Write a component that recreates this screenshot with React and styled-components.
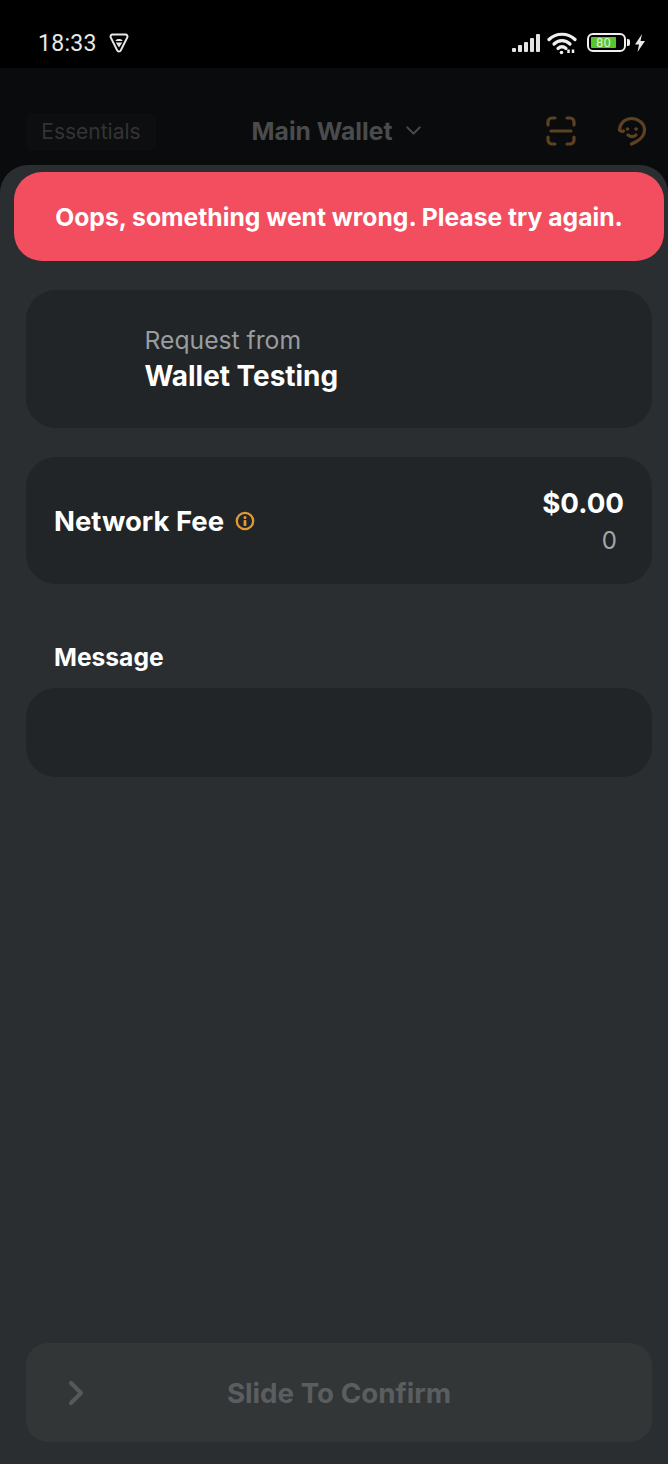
import React from "react";
import styled, { createGlobalStyle } from "styled-components";
import { ChevronDown, ChevronRight } from "lucide-react";

const GlobalStyle = createGlobalStyle`
  html, body {
    margin: 0;
    padding: 0;
    background: #0a0b0c;
  }
  * {
    box-sizing: border-box;
  }
`;

const Screen = styled.div`
  position: relative;
  width: 668px;
  height: 1464px;
  overflow: hidden;
  display: flex;
  flex-direction: column;
  background: #0a0b0c;
  font-family: Inter, "Liberation Sans", sans-serif;
`;

const StatusBar = styled.div`
  height: 68px;
  flex-shrink: 0;
  background: #000;
  display: flex;
  align-items: center;
  justify-content: space-between;
  padding: 17px 22px 0 38px;
  color: #e8e8e8;
`;

const StatusGroup = styled.div`
  display: flex;
  align-items: center;
  gap: ${(p) => p.$gap || 0}px;
`;

const Time = styled.span`
  padding-top: 2px;
  font-family: Roboto, sans-serif;
  font-size: 23px;
  letter-spacing: 0.3px;
`;

const Header = styled.div`
  height: 97px;
  flex-shrink: 0;
  display: flex;
  align-items: center;
  justify-content: space-between;
  padding: 28px 21px 0 26px;
`;

const Pill = styled.div`
  width: 130px;
  height: 38px;
  margin-top: 2px;
  display: flex;
  align-items: center;
  justify-content: center;
  background: #0d0e0f;
  border-radius: 6px;
  color: #323435;
  font-size: 21px;
`;

const WalletName = styled.div`
  display: flex;
  align-items: center;
  gap: 9px;
  margin-right: 24px;
  color: #4a4b4c;
  font-size: 24.700px;
  font-weight: 700;
`;

const HeaderIcons = styled.div`
  display: flex;
  align-items: center;
  gap: 41px;
`;

const Sheet = styled.div`
  flex: 1;
  display: flex;
  flex-direction: column;
  padding: 125px 16px 22px 26px;
  background: #2a2e31;
  border-radius: 28px 28px 0 0;
`;

const Toast = styled.div`
  position: absolute;
  left: 14px;
  top: 172px;
  width: 650px;
  height: 89px;
  display: flex;
  align-items: center;
  justify-content: center;
  background: #f34e5f;
  border-radius: 28px;
  color: #fff;
  font-size: 24.700px;
  font-weight: 700;
  white-space: nowrap;
`;

const Card = styled.div`
  height: ${(p) => p.$height}px;
  margin-bottom: ${(p) => p.$gap || 0}px;
  display: flex;
  background: #212527;
  border-radius: 30px;
`;

const RequestCard = styled(Card)`
  flex-direction: column;
  justify-content: center;
  padding-left: 118.500px;
`;

const FeeCard = styled(Card)`
  align-items: center;
  justify-content: space-between;
  padding: 0 28px;
`;

const RequestLabel = styled.div`
  color: #9a9d9f;
  font-size: 24.700px;
  line-height: 34px;
`;

const RequestName = styled.div`
  color: #fff;
  font-size: 27.900px;
  font-weight: 700;
  line-height: 38px;
`;

const FeeTitle = styled.div`
  display: flex;
  align-items: center;
  gap: 11px;
  color: #fff;
  font-size: 27.500px;
  font-weight: 700;
`;

const FeeAmount = styled.div`
  display: flex;
  flex-direction: column;
  align-items: flex-end;
  gap: 2px;
  margin-top: 2px;
`;

const FeeUsd = styled.div`
  color: #fff;
  font-size: 27.700px;
  font-weight: 700;
  line-height: 36px;
`;

const FeeRaw = styled.div`
  color: #a4a7a9;
  font-size: 24px;
  line-height: 36px;
  padding-right: 7px;
`;

const SectionLabel = styled.div`
  margin: 0 0 15px 28px;
  color: #fff;
  font-size: 24.600px;
  font-weight: 700;
  line-height: 31px;
`;

const Slider = styled.div`
  position: relative;
  height: 99px;
  margin-top: auto;
  display: flex;
  align-items: center;
  justify-content: center;
  background: #323637;
  border-radius: 22px;
  color: #5b5e60;
  font-size: 27.750px;
  font-weight: 700;
`;

const SliderKnob = styled.div`
  position: absolute;
  left: 30px;
  top: 30px;
  color: #55595b;
  display: flex;
`;

const WifiSvg = styled.svg`
  margin: 0 2px 0 -2px;
`;

const BatteryShell = styled.div`
  position: relative;
  width: 39px;
  height: 19px;
  padding: 2px;
  border: 2px solid #f0f0f0;
  border-radius: 6px;
  &::after {
    content: "";
    position: absolute;
    right: -6px;
    top: 4px;
    width: 3px;
    height: 7px;
    border-radius: 0 2px 2px 0;
    background: #f0f0f0;
  }
`;

const BatteryFill = styled.div`
  height: 100%;
  width: 80%;
  display: flex;
  align-items: center;
  justify-content: center;
  background: #58c22f;
  border-radius: 1px;
  color: #d8f5c8;
  font-family: Roboto, sans-serif;
  font-size: 13px;
`;

function ShieldIcon() {
  return (
    <svg width="20" height="20" viewBox="0 0 20 20" fill="none">
      <path d="M3.500 1.500h13a2 2 0 0 1 1.800 2.900l-6.500 13a2 2 0 0 1-3.600 0L1.700 4.400A2 2 0 0 1 3.500 1.500z" stroke="#e8e8e8" strokeWidth="2" />
      <path d="M6.500 8c.6-2.600 6.400-2.600 7 0z" fill="#e8e8e8" />
      <path d="M6.800 9.500h6.400L10 14.500z" fill="#e8e8e8" />
    </svg>
  );
}

function SignalIcon() {
  return (
    <svg width="30" height="20" viewBox="0 0 30 20" fill="#e4e4e4">
      <rect x="1" y="15" width="4" height="4" rx="1" />
      <rect x="7" y="12" width="4" height="7" rx="1" />
      <rect x="13" y="9" width="4" height="10" rx="1" />
      <rect x="19" y="5" width="4" height="14" rx="1" />
      <rect x="25" y="1" width="4" height="18" rx="1" />
    </svg>
  );
}

function WifiIcon() {
  return (
    <WifiSvg width="30" height="24" viewBox="0 0 30 24" fill="none" stroke="#f0f0f0" strokeWidth="3.200" strokeLinecap="round">
      <path d="M2 8.500c7-7 19-7 26 0" />
      <path d="M7 13c4.500-4.500 11.500-4.500 16 0" />
      <path d="M11 17.500c2.500-2.200 5.500-2.200 8 0" />
      <circle cx="14.500" cy="21.500" r="1.800" fill="#f0f0f0" stroke="none" />
      <path d="M21.500 22v-3.500M26 22v-3.500" strokeWidth="2.500" strokeLinecap="butt" />
    </WifiSvg>
  );
}

function BoltIcon() {
  return (
    <svg width="12" height="20" viewBox="0 0 12 20" fill="#e8e8e8">
      <path d="M8 1L1 11.500h4L3.500 19 11 8H6.500z" />
    </svg>
  );
}

function ScanIcon() {
  return (
    <svg width="30" height="30" viewBox="0 0 30 30" fill="none" stroke="#5d4222" strokeWidth="3.200" strokeLinecap="round">
      <path d="M2 9V6a4 4 0 0 1 4-4h3" />
      <path d="M21 2h3a4 4 0 0 1 4 4v3" />
      <path d="M2 21v3a4 4 0 0 0 4 4h3" />
      <path d="M28 21v3a4 4 0 0 1-4 4h-3" />
      <path d="M5 15h20" />
    </svg>
  );
}

function SupportIcon() {
  return (
    <svg width="30" height="30" viewBox="0 0 30 30" fill="none" stroke="#5d4222" strokeWidth="3.200" strokeLinecap="round">
      <path d="M2.500 14C3 7 8 2.500 14.500 2.500S27 7 27.500 13c.3 5-3 10-8 12.500l-5 2.500" />
      <path d="M2.500 14c1.500 1.500 3 1.500 4 1" />
      <circle cx="10.500" cy="13" r="1.300" fill="#5d4222" strokeWidth="1" />
      <circle cx="19" cy="13" r="1.300" fill="#5d4222" strokeWidth="1" />
      <path d="M11 19c2.500 2 5.500 2 8 0" />
    </svg>
  );
}

function InfoIcon() {
  return (
    <svg width="20" height="20" viewBox="0 0 20 20" fill="none">
      <circle cx="10" cy="10" r="8.200" stroke="#e09a35" strokeWidth="2.300" />
      <circle cx="10" cy="6.500" r="1.500" fill="#e09a35" />
      <rect x="8.600" y="9" width="2.800" height="6" rx="0.800" fill="#e09a35" />
    </svg>
  );
}

export default function App() {
  return (
    <>
      <GlobalStyle />
      <Screen>
        <StatusBar>
          <StatusGroup $gap={12}>
            <Time>18:33</Time>
            <ShieldIcon />
          </StatusGroup>
          <StatusGroup $gap={8}>
            <SignalIcon />
            <WifiIcon />
            <BatteryShell>
              <BatteryFill>80</BatteryFill>
            </BatteryShell>
            <BoltIcon />
          </StatusGroup>
        </StatusBar>
        <Header>
          <Pill>Essentials</Pill>
          <WalletName>
            Main Wallet
            <ChevronDown size={25} strokeWidth={2} color="#4a4b4c" />
          </WalletName>
          <HeaderIcons>
            <ScanIcon />
            <SupportIcon />
          </HeaderIcons>
        </Header>
        <Sheet>
          <RequestCard $height={138} $gap={29}>
            <RequestLabel>Request from</RequestLabel>
            <RequestName>Wallet Testing</RequestName>
          </RequestCard>
          <FeeCard $height={127} $gap={58}>
            <FeeTitle>
              Network Fee
              <InfoIcon />
            </FeeTitle>
            <FeeAmount>
              <FeeUsd>$0.00</FeeUsd>
              <FeeRaw>0</FeeRaw>
            </FeeAmount>
          </FeeCard>
          <SectionLabel>Message</SectionLabel>
          <Card $height={89} />
          <Slider>
            <SliderKnob>
              <ChevronRight size={40} strokeWidth={2.500} />
            </SliderKnob>
            Slide To Confirm
          </Slider>
        </Sheet>
        <Toast>Oops, something went wrong. Please try again.</Toast>
      </Screen>
    </>
  );
}
